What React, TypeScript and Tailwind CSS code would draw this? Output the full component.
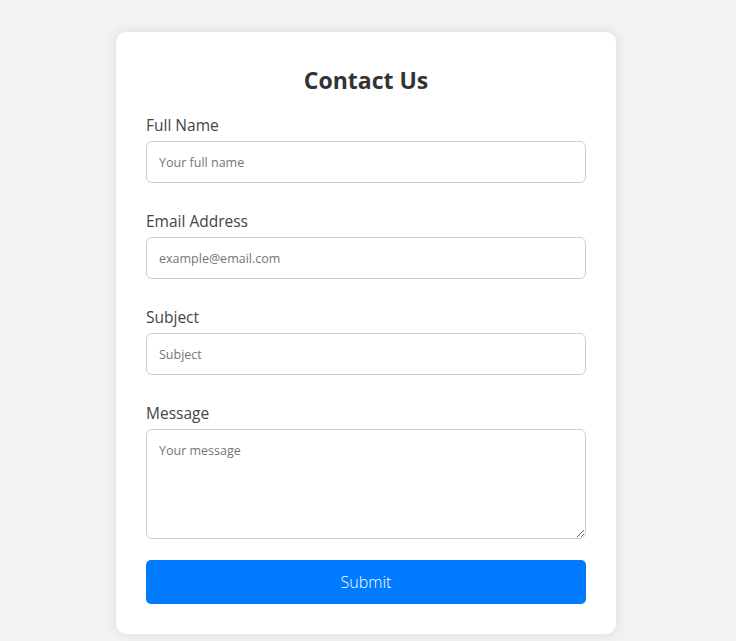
import React from "react";

export default function App() {
  const font = { fontFamily: '"Open Sans", "Noto Sans", sans-serif' };
  const inputCls =
    "h-[42px] border border-[#ccc] rounded-[6px] px-[12px] text-[12.5px] text-[#333] placeholder:text-[#757575] outline-none mb-[27px]";
  const labelCls = "text-[15.5px] text-[#444] leading-[22px] mb-[5px]";
  return (
    <div className="min-h-[641px] bg-[#f2f2f2] flex justify-center pt-[32px] pr-[4px]" style={font}>
      <div className="w-[500px] self-start bg-white rounded-[10px] shadow-[0_0_12px_rgba(0,0,0,0.1)] px-[30px] pt-[33px] pb-[30px]">
        <h2 className="text-center text-[23px] font-bold text-[#333] leading-[30px] mb-[19px]">Contact Us</h2>
        <form className="flex flex-col" onSubmit={(e) => e.preventDefault()}>
          <label className={labelCls}>Full Name</label>
          <input className={inputCls} placeholder="Your full name" />
          <label className={labelCls}>Email Address</label>
          <input className={inputCls} placeholder="example@email.com" />
          <label className={labelCls}>Subject</label>
          <input className={inputCls} placeholder="Subject" />
          <label className={labelCls}>Message</label>
          <textarea className="h-[110px] border border-[#ccc] rounded-[6px] px-[12px] py-[12px] text-[12.5px] text-[#333] placeholder:text-[#757575] outline-none mb-[21px] resize-y" placeholder="Your message" />
          <button type="submit" className="h-[44px] bg-[#007bff] text-white text-[16px] font-light rounded-[5px]">Submit</button>
        </form>
      </div>
    </div>
  );
}
